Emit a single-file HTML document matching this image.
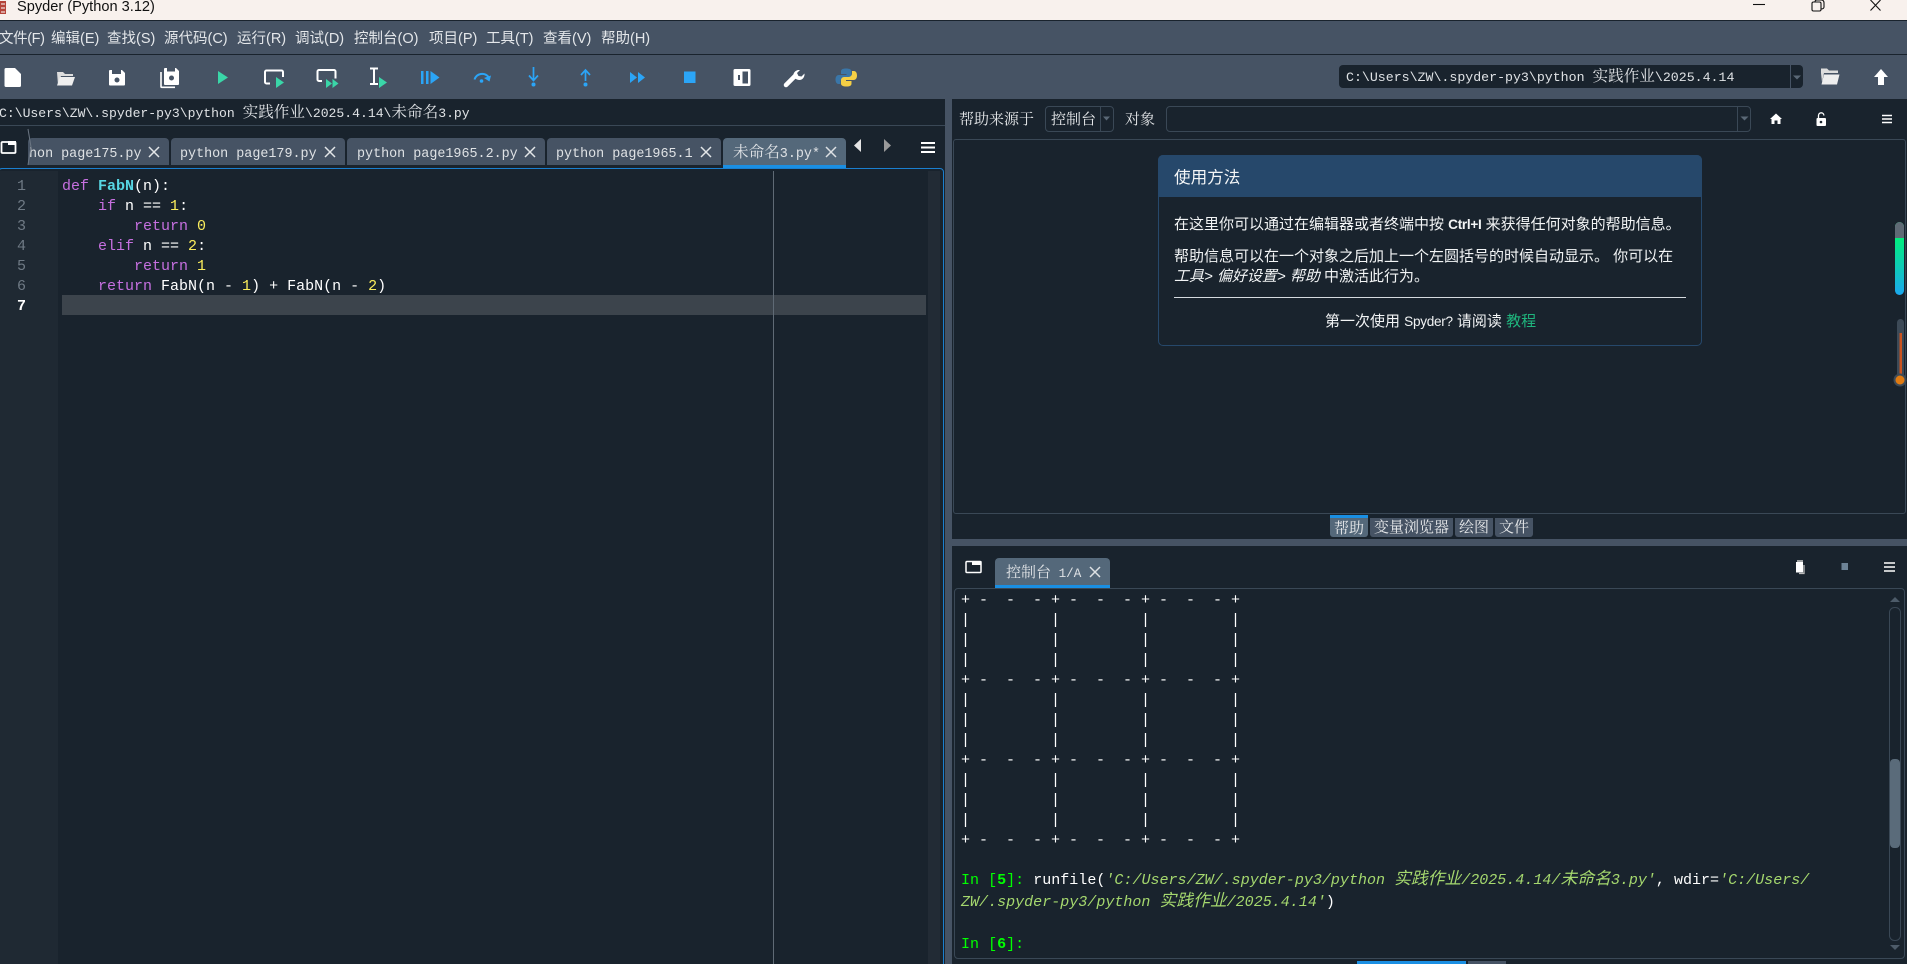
<!DOCTYPE html>
<html><head><meta charset="utf-8">
<style>
html,body{margin:0;padding:0;width:1907px;height:964px;overflow:hidden;background:#19232d}
#r{position:absolute;left:0;top:0;width:1907px;height:964px;overflow:hidden;background:#19232d}
.a{position:absolute}
.t{position:absolute;white-space:pre;line-height:20px;height:20px}
.m{font:14.5px/20px "Liberation Sans","Noto Sans CJK SC",sans-serif;color:#e4e7ea;top:29px}
.s{font:13.4px/20px "Liberation Mono","Noto Serif CJK SC",monospace;color:#dfe2e5}
.c{font-family:"Noto Serif CJK SC",serif;font-size:15.6px;line-height:0}
.h{font:15px/20px "Noto Serif CJK SC",serif;color:#e6e8ea}
.tab{position:absolute;top:138px;height:27px;background:#465364;border-radius:4px 4px 0 0}
.code{font:15px/20px "Liberation Mono",monospace;color:#fff}
.k{color:#c670e0}.n{color:#faed5c}.f{color:#57d6e4;font-weight:bold}
.ln{font:15px/20px "Liberation Mono",monospace;color:#6f7a85;left:17px}
.con{font:15px/20px "Liberation Mono",monospace;color:#fff;left:961px}
.run{letter-spacing:.02px}
.run i{color:#a5d86e}
.run .z{font-family:"Noto Sans CJK SC",sans-serif;font-size:16.8px;letter-spacing:0;line-height:0}
.g{color:#00ff00}.gb{color:#00ff00;font-weight:bold}
.p{font:15px/20px "Liberation Sans","Noto Sans CJK SC",sans-serif;color:#f2f4f5}
.l{font-size:13.6px;letter-spacing:-.3px}
.bt{position:absolute;top:518px;height:19px;background:#465364;border-radius:0 0 3px 3px;font:15px/17px "Noto Serif CJK SC",serif;color:#e6e8ea;text-align:center}
</style></head><body>
<div id="r">

<!-- title -->
<div class="a" style="left:0;top:0;width:1907px;height:20px;background:#f8f1ed"></div>
<div class="a" style="left:0;top:20px;width:1907px;height:1px;background:#19232d"></div>
<div class="a" style="left:0;top:21px;width:1907px;height:33px;background:#465364"></div>
<div class="a" style="left:0;top:54px;width:1907px;height:1px;background:#19232d"></div>
<div class="a" style="left:0;top:55px;width:1907px;height:44px;background:#465364"></div>
<div class="t" style="left:17px;top:-3px;font:14.6px/20px 'Liberation Sans',sans-serif;color:#111">Spyder (Python 3.12)</div>

<!-- menu -->
<div class="t m" style="left:-1px;letter-spacing:-.4px">文件(F)</div>
<div class="t m" style="left:51px">编辑(E)</div>
<div class="t m" style="left:107px">查找(S)</div>
<div class="t m" style="left:164px">源代码(C)</div>
<div class="t m" style="left:237px">运行(R)</div>
<div class="t m" style="left:295px">调试(D)</div>
<div class="t m" style="left:354px">控制台(O)</div>
<div class="t m" style="left:429px">项目(P)</div>
<div class="t m" style="left:486px">工具(T)</div>
<div class="t m" style="left:543px">查看(V)</div>
<div class="t m" style="left:601px">帮助(H)</div>

<!-- dir combo -->
<div class="a" style="left:1339px;top:65px;width:464px;height:23px;background:#19232d;border-radius:4px"></div>
<div class="a" style="left:1790px;top:65px;width:1px;height:23px;background:#465364"></div>
<div class="t s" style="left:1346px;top:68px;font-size:13.25px">C:\Users\ZW\.spyder-py3\python <span class="c">实践作业</span>\2025.4.14</div>

<!-- editor -->
<div class="t s" style="left:-1px;top:104px;font-size:13.1px">C:\Users\ZW\.spyder-py3\python <span class="c">实践作业</span>\2025.4.14\<span class="c">未命名</span>3.py</div>
<div class="a" style="left:0;top:125px;width:945px;height:1px;background:#3a4856"></div>

<div class="tab" style="left:28px;width:141px"></div>
<div class="tab" style="left:171px;width:174px"></div>
<div class="tab" style="left:347px;width:198px"></div>
<div class="tab" style="left:547px;width:174px"></div>
<div class="tab" style="left:723px;width:123px;background:#54687a"></div>
<div class="a" style="left:723px;top:165px;width:123px;height:3px;background:#1a8fe3"></div>
<div class="t s" style="left:29px;top:145px">hon page175.py</div>
<div class="t s" style="left:180px;top:145px">python page179.py</div>
<div class="t s" style="left:357px;top:145px">python page1965.2.py</div>
<div class="t s" style="left:556px;top:145px">python page1965.1</div>
<div class="t s" style="left:733px;top:145px"><span class="c">未命名</span>3.py*</div>

<div class="a" style="left:-2px;top:168px;width:944px;height:820px;border:1px solid #1a7fcf;border-radius:4px"></div>
<div class="a" style="left:0;top:171px;width:58px;height:793px;background:#1f2933"></div>
<div class="a" style="left:62px;top:295px;width:864px;height:20px;background:#3c444c"></div>
<div class="a" style="left:928px;top:171px;width:12px;height:793px;background:#222b35"></div>
<div class="a" style="left:773px;top:171px;width:1px;height:793px;background:#5f6a75"></div>

<div class="t ln" style="top:177px">1</div>
<div class="t ln" style="top:197px">2</div>
<div class="t ln" style="top:217px">3</div>
<div class="t ln" style="top:237px">4</div>
<div class="t ln" style="top:257px">5</div>
<div class="t ln" style="top:277px">6</div>
<div class="t ln" style="top:297px;color:#fff;font-weight:bold">7</div>

<div class="t code" style="left:62px;top:177px"><span class="k">def</span> <span class="f">FabN</span>(n):</div>
<div class="t code" style="left:62px;top:197px">    <span class="k">if</span> n == <span class="n">1</span>:</div>
<div class="t code" style="left:62px;top:217px">        <span class="k">return</span> <span class="n">0</span></div>
<div class="t code" style="left:62px;top:237px">    <span class="k">elif</span> n == <span class="n">2</span>:</div>
<div class="t code" style="left:62px;top:257px">        <span class="k">return</span> <span class="n">1</span></div>
<div class="t code" style="left:62px;top:277px">    <span class="k">return</span> FabN(n - <span class="n">1</span>) + FabN(n - <span class="n">2</span>)</div>

<!-- splitters -->
<div class="a" style="left:945px;top:99px;width:7px;height:865px;background:#465364"></div>
<div class="a" style="left:945px;top:539px;width:962px;height:7px;background:#465364"></div>

<!-- help toolbar -->
<div class="t h" style="left:959px;top:109px">帮助来源于</div>
<div class="a" style="left:1045px;top:106px;width:67px;height:24px;border:1px solid #3a4856;border-radius:4px"></div>
<div class="a" style="left:1100px;top:106px;width:1px;height:25px;background:#3a4856"></div>
<div class="t h" style="left:1051px;top:109px">控制台</div>
<div class="t h" style="left:1125px;top:109px">对象</div>
<div class="a" style="left:1166px;top:106px;width:583px;height:24px;border:1px solid #3a4856;border-radius:4px"></div>
<div class="a" style="left:1737px;top:106px;width:1px;height:25px;background:#3a4856"></div>
<div class="a" style="left:953px;top:139px;height:375px;border:1px solid #3a4856;border-radius:3px;box-sizing:border-box;width:953px"></div>

<!-- help card -->
<div class="a" style="left:1158px;top:155px;width:544px;height:191px;box-sizing:border-box;border:1px solid #26486b;border-radius:5px"></div>
<div class="a" style="left:1158px;top:155px;width:544px;height:42px;background:#26486b;border-radius:5px 5px 0 0"></div>
<div class="t" style="left:1174px;top:168px;font:16.6px/20px 'Liberation Sans','Noto Sans CJK SC',sans-serif;color:#f4f6f7">使用方法</div>
<div class="t p" style="left:1174px;top:215px">在这里你可以通过在编辑器或者终端中按 <b class="l">Ctrl+I</b> 来获得任何对象的帮助信息。</div>
<div class="t p" style="left:1174px;top:247px">帮助信息可以在一个对象之后加上一个左圆括号的时候自动显示。 你可以在</div>
<div class="t p" style="left:1174px;top:267px"><i>工具&gt; 偏好设置&gt; 帮助</i> 中激活此行为。</div>
<div class="a" style="left:1174px;top:297px;width:512px;height:1px;background:#d5dadf"></div>
<div class="t p" style="left:1325px;top:312px">第一次使用 <span class="l">Spyder?</span> 请阅读 <span style="color:#1fb57d">教程</span></div>

<!-- bottom tabs -->
<div class="bt" style="left:1330px;top:515px;width:38px;height:22px;line-height:20px;background:#54687a;border-top:3px solid #1a8fe3;box-sizing:border-box">帮助</div>
<div class="bt" style="left:1370px;width:83px">变量浏览器</div>
<div class="bt" style="left:1455px;width:38px">绘图</div>
<div class="bt" style="left:1495px;width:38px">文件</div>

<!-- console -->
<div class="a" style="left:995px;top:558px;width:115px;height:27px;background:#54687a;border-radius:4px 4px 0 0"></div>
<div class="a" style="left:995px;top:585px;width:115px;height:3px;background:#1a8fe3"></div>
<div class="t s" style="left:1006px;top:564px;font-size:12.6px"><span class="c" style="font-size:15px">控制台</span> 1/A</div>
<div class="a" style="left:954px;top:588px;width:951px;height:371px;box-sizing:border-box;border:1px solid #3a4856;border-radius:4px"></div>

<div class="t con" style="top:591px">+ -  -  - + -  -  - + -  -  - +</div>
<div class="t con" style="top:611px">|         |         |         |</div>
<div class="t con" style="top:631px">|         |         |         |</div>
<div class="t con" style="top:651px">|         |         |         |</div>
<div class="t con" style="top:671px">+ -  -  - + -  -  - + -  -  - +</div>
<div class="t con" style="top:691px">|         |         |         |</div>
<div class="t con" style="top:711px">|         |         |         |</div>
<div class="t con" style="top:731px">|         |         |         |</div>
<div class="t con" style="top:751px">+ -  -  - + -  -  - + -  -  - +</div>
<div class="t con" style="top:771px">|         |         |         |</div>
<div class="t con" style="top:791px">|         |         |         |</div>
<div class="t con" style="top:811px">|         |         |         |</div>
<div class="t con" style="top:831px">+ -  -  - + -  -  - + -  -  - +</div>

<div class="t con run" style="top:871px"><span class="g">In [</span><span class="gb">5</span><span class="g">]:</span> runfile(<i>'C:/Users/ZW/.spyder-py3/python <span class="z">实践作业</span>/2025.4.14/<span class="z">未命名</span>3.py'</i>, wdir=<i>'C:/Users/</i></div>
<div class="t con run" style="top:893px"><i>ZW/.spyder-py3/python <span class="z">实践作业</span>/2025.4.14'</i>)</div>
<div class="t con run" style="top:935px"><span class="g">In [</span><span class="gb">6</span><span class="g">]:</span></div>

<div class="a" style="left:1357px;top:961px;width:109px;height:3px;background:#1a8fe3"></div>
<div class="a" style="left:1468px;top:961px;width:38px;height:3px;background:#465364"></div>

<!-- icons overlay -->
<svg class="a" style="left:0;top:0" width="1907" height="964" viewBox="0 0 1907 964" fill="none">
<!-- title icon -->
<rect x="0" y="1" width="6" height="13" fill="#b5453a"/>
<path d="M1 4h4M1 8h4M1 12h4" stroke="#fff"/>
<!-- window controls -->
<path d="M1753 4.500h12" stroke="#111" stroke-width="1.100"/>
<rect x="1812" y="2" width="9" height="9" rx="1.500" stroke="#111" stroke-width="1.100"/>
<path d="M1815 2c0-2 1-2 2-2h4c2 0 3 1 3 3v4c0 1-1 2-3 2" stroke="#111" stroke-width="1.100"/>
<path d="M1870.500 0l10 10.500M1880.500 0l-10 10.500" stroke="#111" stroke-width="1.100"/>

<!-- new -->
<path d="M6 68h9l6 6v11.500a1.500 1.500 0 0 1-1.500 1.500h-13.500a1.500 1.500 0 0 1-1.500-1.500v-16a1.500 1.500 0 0 1 1.500-1.500z" fill="#fff"/>
<!-- open -->
<path d="M57 72h6l2 2h8v2h-12l-3 9z" fill="#ddd"/><path d="M60 77h15l-3 8.500h-15z" fill="#eee"/>
<!-- save -->
<path d="M110 70h12l3 3v11.500a1 1 0 0 1-1 1h-14a1 1 0 0 1-1-1v-13.500a1 1 0 0 1 1-1z" fill="#fff"/>
<rect x="112" y="70" width="9" height="4" fill="#465364"/><circle cx="117" cy="80" r="2.500" fill="#465364"/>
<!-- save all -->
<path d="M165 68h11l3 3v13a1 1 0 0 1-1 1h-13a1 1 0 0 1-1-1v-15a1 1 0 0 1 1-1z" fill="#fff"/>
<rect x="167" y="68" width="8" height="3.500" fill="#465364"/><circle cx="171.500" cy="78" r="2.500" fill="#465364"/>
<path d="M161 72v14.500a.8.8 0 0 0 .8.8h13.200" stroke="#fff" stroke-width="1.600"/>
<!-- run -->
<path d="M218 71l10 6.500-10 6.500z" fill="#3ad6a8"/>
<!-- run cell -->
<path d="M270 83.500h-3.500a1.500 1.500 0 0 1-1.500-1.500v-10a1.500 1.500 0 0 1 1.500-1.500h15a1.500 1.500 0 0 1 1.500 1.500v5" stroke="#fff" stroke-width="2"/>
<path d="M276 77l8 5.500-8 5.500z" fill="#3ad6a8"/>
<!-- run cell advance -->
<path d="M322 81h-3a1.500 1.500 0 0 1-1.500-1.500v-8a1.500 1.500 0 0 1 1.500-1.500h15a1.500 1.500 0 0 1 1.500 1.500v7" stroke="#fff" stroke-width="2"/>
<path d="M326 79l6 4.500-6 4.500zM332.500 79l6 4.500-6 4.500z" fill="#3ad6a8"/>
<!-- run selection -->
<path d="M370 68.500h8M370 84h8M374 68.500v15.500" stroke="#fff" stroke-width="2"/>
<path d="M379 77l8 5.500-8 5.500z" fill="#3ad6a8"/>
<!-- debug -->
<path d="M421 71h2.500v13h-2.500zM426 71h2.500v13h-2.500zM430.500 71l9 6.500-9 6.500z" fill="#2ba5f7"/>
<!-- step over -->
<path d="M474.500 79.500a8 8 0 0 1 14-2.500" stroke="#2ba5f7" stroke-width="2"/>
<path d="M484 78l7-2.500-1.500 6z" fill="#2ba5f7"/><circle cx="481.500" cy="81" r="1.800" fill="#2ba5f7"/>
<!-- step in -->
<path d="M533.500 67v13M529 75.500l4.500 5 4.500-5" stroke="#2ba5f7" stroke-width="1.700"/><circle cx="533.500" cy="84.500" r="2" fill="#2ba5f7"/>
<!-- step out -->
<path d="M585.500 70v11M581 75l4.500-5 4.500 5" stroke="#2ba5f7" stroke-width="1.700"/><circle cx="585.500" cy="84.500" r="2" fill="#2ba5f7"/>
<!-- continue -->
<path d="M630 72l7 5.500-7 5.500zM638 72l7 5.500-7 5.500z" fill="#2ba5f7"/>
<!-- stop -->
<rect x="684" y="71.500" width="11.500" height="11.500" fill="#2ba5f7"/>
<!-- maximize -->
<rect x="733.500" y="69" width="17" height="17" rx="1.500" fill="#fff"/>
<path d="M742.500 71.500h5.500v12h-5.500zM736 75h4v5h-4z" fill="#465364"/>
<path d="M736 71.500h4v2h-2v8h2v2h-4z" fill="#fff"/>
<!-- wrench -->
<path d="M786 85l9.500-9.500" stroke="#fff" stroke-width="4.500" stroke-linecap="round"/>
<path d="M794 78c-2-4 1-8 5-8l1 0-3 3 1.500 3 3 0.500 3-3c.5 4-3 8-7.500 6z" fill="#fff"/>
<!-- python -->
<g transform="translate(0 0)">
<path d="M846 68.500c-3.500 0-5 1-5 3v2.500h5.500v1h-7.500c-2 0-3.500 1.500-3.500 4.500s1.500 4.500 3 4.500h2v-2.500c0-2 1.500-3.500 3.500-3.500h4.500c1.500 0 3-1.500 3-3v-3.500c0-2-2-3-5.500-3z" fill="#3a76a8"/>
<path d="M846.500 86.500c3.500 0 5-1 5-3v-2.500h-5.500v-1h7.500c2 0 3.500-1.500 3.500-4.500s-1.500-4.500-3-4.500h-2v2.500c0 2-1.500 3.500-3.500 3.500h-4.500c-1.500 0-3 1.500-3 3v3.500c0 2 2 3 5.500 3z" fill="#f5cf45"/>
</g>
<!-- dir controls -->
<path d="M1793 75.500h8l-4 4z" fill="#5a6876"/>
<path d="M1821 73v-4.500h6l2 2h9v2.500h-14l-2 9z" fill="#ddd"/><path d="M1824 74.500h15.500l-2.500 10h-15.500z" fill="#eee"/>
<path d="M1881 69l7 8h-4v8h-6v-8h-4z" fill="#fff"/>

<!-- editor small icons -->
<rect x="1.500" y="142" width="14" height="11" rx="1" stroke="#fff" stroke-width="1.800"/><rect x="8" y="141" width="8" height="4" fill="#fff"/>
<path d="M28 129l3 18-3 18" stroke="#6b7683" stroke-width="1"/>
<path d="M149 147l10 10M159 147l-10 10M325 147l10 10M335 147l-10 10M525 147l10 10M535 147l-10 10M701 147l10 10M711 147l-10 10" stroke="#e3e6e8" stroke-width="1.500"/>
<path d="M826 147l10 10M836 147l-10 10" stroke="#dde1e4" stroke-width="1.500"/>
<path d="M861 139v13l-7-6.500z" fill="#e4e4e4"/>
<path d="M884 139v13l7-6.500z" fill="#9a9a9a"/>
<path d="M921 143h14M921 147.500h14M921 152h14" stroke="#fff" stroke-width="2"/>

<!-- help controls -->
<path d="M1103 116.500h7l-3.500 4z" fill="#5a6876"/>
<path d="M1740.500 116.500h8l-4 4z" fill="#5a6876"/>
<path d="M1776 113.500l6 5.500h-1.500v5h-3v-3.500h-3v3.500h-3v-5h-1.500z" fill="#fff"/>
<rect x="1816.500" y="118" width="9.500" height="8" rx="1" fill="#fff"/><circle cx="1821" cy="122" r="1.300" fill="#19232d"/>
<path d="M1818.500 118v-2.500a2.700 2.700 0 0 1 5.400 0" stroke="#fff" stroke-width="1.300"/>
<path d="M1882 115.500h10M1882 119h10M1882 122.500h10" stroke="#fff" stroke-width="1.500"/>

<!-- help side widgets -->
<defs><linearGradient id="gr" x1="0" y1="0" x2="0" y2="1"><stop offset="0.2" stop-color="#00f07a"/><stop offset="1" stop-color="#1ba8f0"/></linearGradient></defs>
<rect x="1895" y="222" width="9" height="73" rx="4.500" fill="url(#gr)"/>
<path d="M1895 238v-11.500a4.500 4.500 0 0 1 9 0v11.500z" fill="#5f6a75"/>
<rect x="1897" y="319" width="7" height="66" rx="3.500" fill="#3d4a57"/>
<rect x="1899.500" y="333" width="2.500" height="46" fill="#c9531f"/>
<circle cx="1900" cy="380" r="6.500" fill="#3d4a57"/><circle cx="1900" cy="380" r="4.500" fill="#e07b12"/>

<!-- console controls -->
<rect x="966" y="561.500" width="15" height="11" rx="1" stroke="#fff" stroke-width="1.500"/><rect x="972" y="561" width="9.500" height="4" fill="#fff"/>
<path d="M1090 567l10 10M1100 567l-10 10" stroke="#dde1e4" stroke-width="1.500"/>
<path d="M1796 562h7v10.500h-7z" fill="#fff"/><path d="M1797 561h6" stroke="#ccc" stroke-width="1.500"/><path d="M1804 565v8.500h-5" stroke="#bbb" stroke-width="1.300"/>
<rect x="1841.500" y="563" width="6.500" height="7" fill="#6d8396"/>
<path d="M1884 563h11M1884 567h11M1884 571h11" stroke="#fff" stroke-width="1.500"/>

<!-- console scrollbar -->
<path d="M1895 597l5 5h-10z" fill="#4d5b69"/>
<rect x="1889.500" y="607.500" width="11" height="333" rx="5" stroke="#3a4856"/>
<rect x="1890" y="759" width="10" height="89" rx="4" fill="#5a6b7a"/>
<path d="M1890 945h10l-5 5z" fill="#4d5b69"/>
</svg>
</div>
</body></html>
